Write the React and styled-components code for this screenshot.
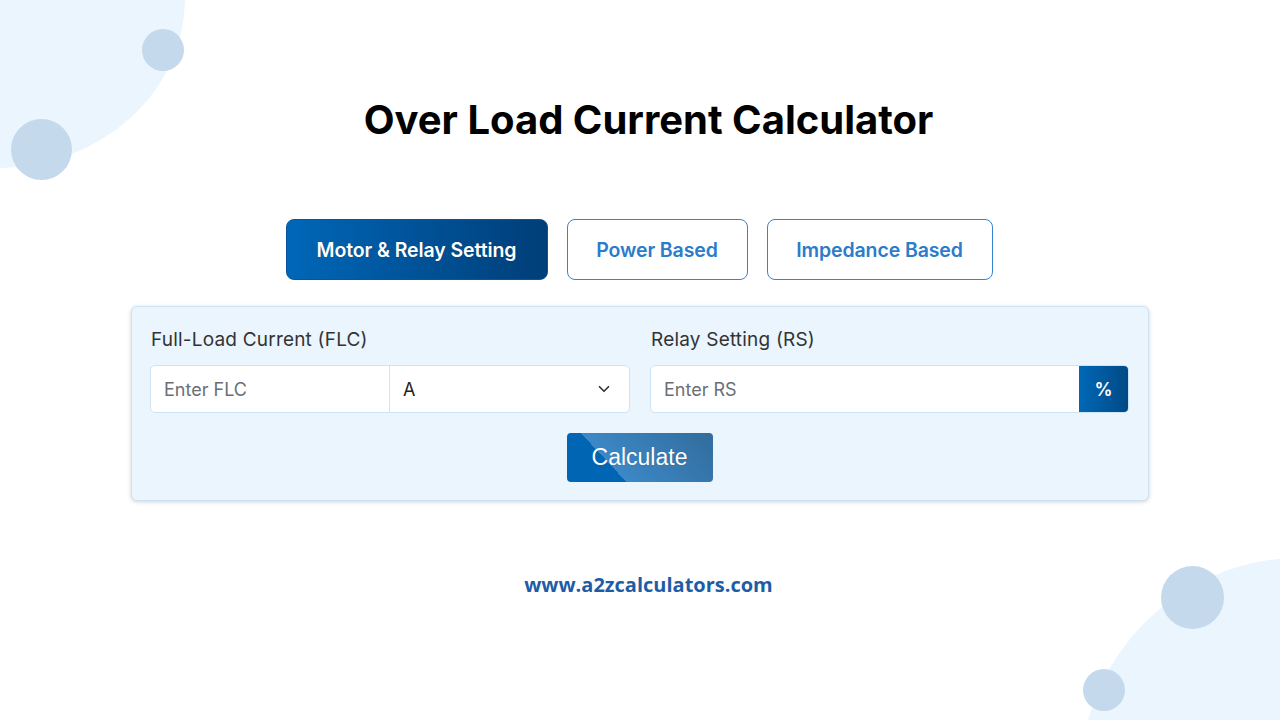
import React from 'react';
import styled, { createGlobalStyle } from 'styled-components';

const GlobalStyle = createGlobalStyle`
  * { box-sizing: border-box; }
  body {
    margin: 0;
    background: #ffffff;
    font-family: Inter, "Noto Sans", sans-serif;
    overflow: hidden;
  }
`;

const tabs = [
  { label: 'Motor & Relay Setting', width: 262, active: true },
  { label: 'Power Based', width: 181 },
  { label: 'Impedance Based', width: 226 },
];

const ChevronDown = () => (
  <svg width="18" height="18" viewBox="0 0 24 24" fill="none" stroke="#333" strokeWidth="2.2" strokeLinecap="round" strokeLinejoin="round">
    <path d="M6 9l6 6 6-6" />
  </svg>
);

const App = () => {
  return (
    <Page>
      <GlobalStyle />
      <Blob $corner="tl" />
      <Blob $corner="br" />
      <Dot $size={42} $x={142} $y={29} />
      <Dot $size={61} $x={11} $y={119} />
      <Dot $size={63} $x={1161} $y={566} />
      <Dot $size={42} $x={1083} $y={669} />

      <Main>
        <Title>Over Load Current Calculator</Title>

        <Tabs>
          {tabs.map(tab => (
            <Tab key={tab.label} $active={tab.active} $width={tab.width}>
              {tab.label}
            </Tab>
          ))}
        </Tabs>

        <Card>
          <Fields>
            <Field>
              <Label>Full-Load Current (FLC)</Label>
              <InputGroup>
                <Input placeholder="Enter FLC" />
                <Select>
                  <span>A</span>
                  <ChevronDown />
                </Select>
              </InputGroup>
            </Field>
            <Field>
              <Label>Relay Setting (RS)</Label>
              <InputGroup>
                <Input placeholder="Enter RS" />
                <Addon>%</Addon>
              </InputGroup>
            </Field>
          </Fields>
          <CalcButton>Calculate</CalcButton>
        </Card>

        <Footer>www.a2zcalculators.com</Footer>
      </Main>
    </Page>
  );
};

const Page = styled.div`
  position: relative;
  width: 1280px;
  height: 720px;
  overflow: hidden;
  background: #ffffff;
`;

const Blob = styled.div`
  position: absolute;
  background: #eaf5fe;
  border-radius: 50%;
  ${props =>
    props.$corner === 'tl'
      ? 'left: -190px; top: -172px; width: 375px; height: 340px;'
      : 'left: 1080px; top: 558px; width: 440px; height: 444px;'}
`;

const Dot = styled.div`
  position: absolute;
  left: ${props => props.$x}px;
  top: ${props => props.$y}px;
  width: ${props => props.$size}px;
  height: ${props => props.$size}px;
  border-radius: 50%;
  background: #c4d9ec;
`;

const Main = styled.main`
  position: relative;
  display: flex;
  flex-direction: column;
  align-items: center;
  padding-top: 95px;
`;

const Title = styled.h1`
  margin: 0 0 0 17px;
  font-family: Inter, "Noto Sans", sans-serif;
  font-weight: 700;
  font-size: 40px;
  line-height: 50px;
  color: #000000;
`;

const Tabs = styled.div`
  display: flex;
  gap: 19px;
  margin-top: 74px;
  margin-left: -2px;
`;

const Tab = styled.button`
  width: ${props => props.$width}px;
  height: 61px;
  border-radius: 8px;
  font-family: Inter, "Noto Sans", sans-serif;
  font-size: 19.5px;
  font-weight: 600;
  letter-spacing: -0.1px;
  cursor: pointer;
  border: 1.5px solid ${props => (props.$active ? '#0a5499' : '#3584d0')};
  color: ${props => (props.$active ? '#ffffff' : '#2b7cca')};
  background: ${props =>
    props.$active ? 'linear-gradient(to right, #0067b8, #003e78)' : '#ffffff'};
  text-shadow: ${props => (props.$active ? '0 0 1px rgba(0,0,0,0.3)' : 'none')};
`;

const Card = styled.section`
  width: 1018px;
  margin-top: 26px;
  padding: 21px 19px 18px 18px;
  background: #eaf5fe;
  border: 1px solid #cde2f4;
  border-radius: 6px;
  box-shadow: 0 1px 4px rgba(0, 0, 0, 0.18);
  display: flex;
  flex-direction: column;
  align-items: center;
`;

const Fields = styled.div`
  width: 100%;
  display: grid;
  grid-template-columns: 480px 1fr;
  gap: 20px;
`;

const Field = styled.div`
  display: flex;
  flex-direction: column;
  gap: 13px;
`;

const Label = styled.label`
  font-size: 19px;
  line-height: 24px;
  letter-spacing: 0.2px;
  color: #333333;
  padding-left: 1px;
`;

const InputGroup = styled.div`
  display: flex;
  height: 48px;
  background: #ffffff;
  border: 1px solid #cde4f7;
  border-radius: 5px;
  overflow: hidden;
`;

const Input = styled.input`
  flex: 1;
  min-width: 0;
  border: none;
  outline: none;
  padding: 0 13px;
  font-family: Inter, "Noto Sans", sans-serif;
  font-size: 18px;
  color: #222222;
  background: transparent;

  &::placeholder {
    color: #6a6f76;
  }
`;

const Select = styled.div`
  width: 240px;
  display: flex;
  align-items: center;
  justify-content: space-between;
  padding: 0 16px 0 13px;
  border-left: 1px solid #cde4f7;
  font-size: 18px;
  color: #222222;
`;

const Addon = styled.div`
  width: 49px;
  display: flex;
  align-items: center;
  justify-content: center;
  background: linear-gradient(to right, #0068b6, #004a86);
  color: #ffffff;
  font-size: 18px;
  font-weight: 600;
`;

const CalcButton = styled.button`
  margin-top: 20px;
  width: 146px;
  height: 49px;
  border: none;
  border-radius: 4px;
  cursor: pointer;
  font-family: "Liberation Sans", Arial, sans-serif;
  font-size: 23px;
  color: #ffffff;
  background: linear-gradient(47deg, #0066b3 31%, #3c88c6 31%, #326c9c 100%);
  text-shadow: 0 0 1px rgba(0, 0, 0, 0.25);
`;

const Footer = styled.div`
  margin: 70px 0 0 17px;
  font-family: "Open Sans", sans-serif;
  font-weight: 700;
  font-size: 20px;
  line-height: 28px;
  color: #1e5da6;
`;

export default App;
